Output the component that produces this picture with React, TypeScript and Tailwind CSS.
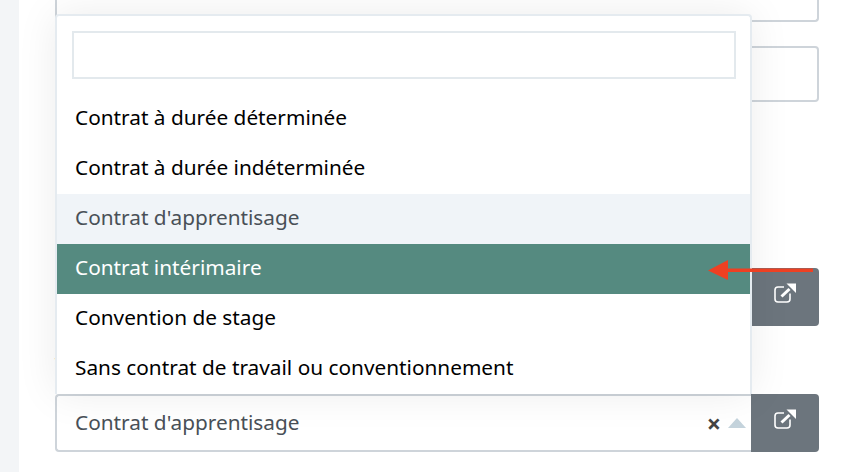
const options = [
  { label: 'Contrat à durée déterminée', className: 'text-black' },
  { label: 'Contrat à durée indéterminée', className: 'text-black' },
  { label: "Contrat d'apprentisage", className: 'bg-[#f0f4f8] text-[#495057]' },
  { label: 'Contrat intérimaire', className: 'bg-[#558a80] text-white' },
  { label: 'Convention de stage', className: 'text-black' },
  { label: 'Sans contrat de travail ou conventionnement', className: 'text-black' },
]

function LinkIcon() {
  return (
    <svg width="24" height="22" viewBox="0 0 24 22" fill="none" className="text-white">
      <path d="M17 11.5V17a3 3 0 0 1-3 3H5a3 3 0 0 1-3-3V8a3 3 0 0 1 3-3h6" stroke="currentColor" strokeWidth="1.6" />
      <path d="M8.5 14.5 L16.5 7" stroke="currentColor" strokeWidth="3" />
      <path d="M13.5 1.5 H23 V11 Z" fill="currentColor" />
    </svg>
  )
}

function LinkButton() {
  return (
    <div className="flex h-[58px] w-[68px] items-center justify-center rounded-r bg-[#6c757d] pb-[9px]">
      <LinkIcon />
    </div>
  )
}

export default function App() {
  return (
    <div className="relative flex h-[472px] w-[852px] overflow-hidden bg-white font-['Noto_Sans',sans-serif]">
      <div className="w-[19px] shrink-0 bg-[#f3f5f7]" />
      <div className="flex-1 pl-[36px] pr-[33px]">
        <div className="h-[22px] overflow-hidden rounded-b border-2 border-t-0 border-[#ced4da]">
          <div className="-mt-[24px] pl-[19px] text-[20.8px] leading-[28px] text-[#adb5bd]">Sélectionner un élément</div>
        </div>
        <div className="mt-[24px] h-[56px] rounded border-2 border-[#ced4da]" />
        <div className="mt-[166px] flex justify-end">
          <LinkButton />
        </div>
        <div className="mt-[26px] h-[20px] text-[15px] leading-[20px] text-[#212529]">Type de contrat</div>
        <div className="mt-[22px] flex">
          <div className="flex h-[58px] flex-1 items-center rounded-l border-2 border-r-0 border-[#ced4da] pl-[18px] pr-[5px]">
            <span className="flex-1 text-[20.8px] text-[#495057]">Contrat d'apprentisage</span>
            <span className="mr-[7px] text-[25px] font-bold leading-none text-[#444]">×</span>
            <span className="h-0 w-0 border-x-[9px] border-b-[10px] border-x-transparent border-b-[#c4d3dc]" />
          </div>
          <LinkButton />
        </div>
      </div>

      <div className="absolute left-[55px] top-[14px] h-[380px] w-[697px] rounded-t border-2 border-b-0 border-[#e5ebf0] bg-white shadow-[0_0_40px_rgba(0,0,0,0.08)]">
        <div className="pb-[15px] pl-[15px] pr-[14px] pt-[15px]">
          <div className="h-[48px] border-2 border-[#e3e9ed]" />
        </div>
        {options.map((option) => (
          <div key={option.label} className={`flex h-[50px] items-center pb-[2px] pl-[18px] text-[20.8px] ${option.className}`}>
            {option.label}
          </div>
        ))}
      </div>

      {/* annotation arrow */}
      <svg width="110" height="24" viewBox="0 0 110 24" className="absolute left-[706px] top-[259px]">
        <path d="M2 11.5 L22 1 V9.5 H107 V13 H22 V21 Z" fill="#ee4023" />
      </svg>
    </div>
  )
}
